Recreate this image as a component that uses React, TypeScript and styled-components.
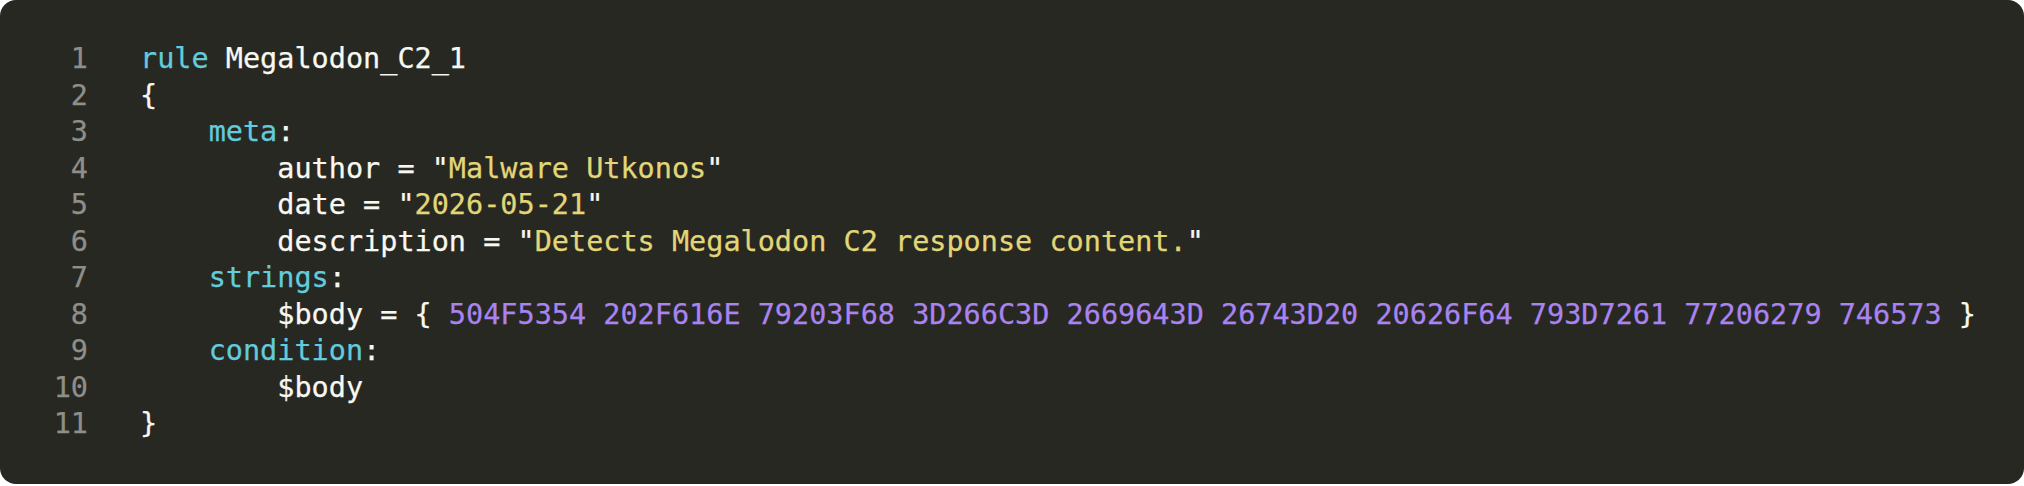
import React from "react";
import styled, { createGlobalStyle } from "styled-components";

const Global = createGlobalStyle`
  html, body { margin: 0; padding: 0; background: #ffffff; }
  #root { width: 2024px; height: 486px; }
`;

const Panel = styled.div`
  box-sizing: border-box;
  width: 2024px;
  height: 484px;
  background: #282823;
  border-radius: 16px;
  padding: 41px 0 0 0;
  font-family: "DejaVu Sans Mono", "Liberation Mono", monospace;
  font-size: 28.5px;
  line-height: 36.5px;
  color: #f8f8f2;
  -webkit-text-stroke: 0.25px currentColor;
`;

const CodeGrid = styled.div`
  display: grid;
  grid-template-columns: 88px 1fr;
  column-gap: 52px;
`;

const LineNo = styled.div`
  text-align: right;
  color: #8f8f89;
  white-space: pre;
`;

const Code = styled.div`
  white-space: pre;
`;

type Kind = "kw" | "str" | "hex" | "plain";

const colors: Record<Kind, string> = {
  kw: "#62cbdd",
  str: "#e2d677",
  hex: "#a984f0",
  plain: "#f8f8f2",
};

const Tok = styled.span<{ $kind: Kind }>`
  color: ${(p) => colors[p.$kind]};
`;

type Line = [Kind, string][];

const hex =
  "504F5354 202F616E 79203F68 3D266C3D 2669643D 26743D20 20626F64 793D7261 77206279 746573";

const lines: Line[] = [
  [["kw", "rule"], ["plain", " Megalodon_C2_1"]],
  [["plain", "{"]],
  [["plain", "    "], ["kw", "meta"], ["plain", ":"]],
  [["plain", '        author = "'], ["str", "Malware Utkonos"], ["plain", '"']],
  [["plain", '        date = "'], ["str", "2026-05-21"], ["plain", '"']],
  [
    ["plain", '        description = "'],
    ["str", "Detects Megalodon C2 response content."],
    ["plain", '"'],
  ],
  [["plain", "    "], ["kw", "strings"], ["plain", ":"]],
  [["plain", "        $body = { "], ["hex", hex], ["plain", " }"]],
  [["plain", "    "], ["kw", "condition"], ["plain", ":"]],
  [["plain", "        $body"]],
  [["plain", "}"]],
];

export default function App() {
  return (
    <>
      <Global />
      <Panel>
        <CodeGrid>
          {lines.map((line, i) => (
            <React.Fragment key={i}>
              <LineNo>{i + 1}</LineNo>
              <Code>
                {line.map(([k, t], j) => (
                  <Tok key={j} $kind={k}>
                    {t}
                  </Tok>
                ))}
              </Code>
            </React.Fragment>
          ))}
        </CodeGrid>
      </Panel>
    </>
  );
}
